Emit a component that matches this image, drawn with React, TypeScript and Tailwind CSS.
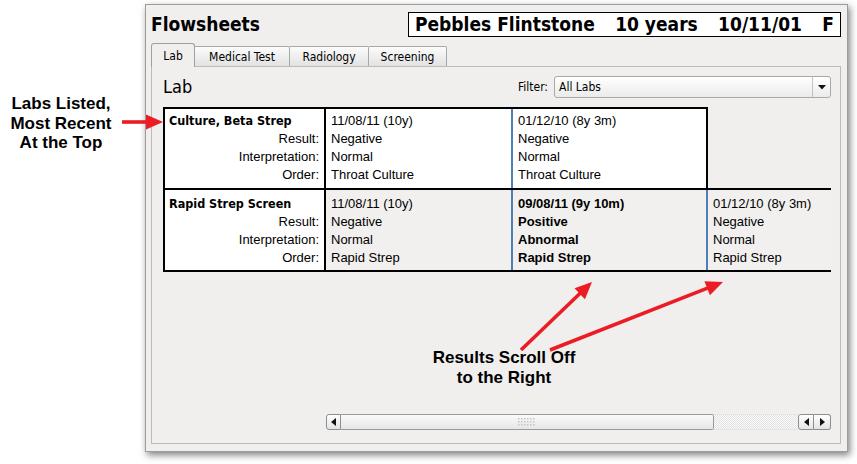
import React from "react";

const UI = { fontFamily: '"DejaVu Sans Condensed", "DejaVu Sans", sans-serif' };
const ARIAL = { fontFamily: '"Liberation Sans", Arial, sans-serif' };

function Arrow({ x1, y1, x2, y2 }: { x1: number; y1: number; x2: number; y2: number }) {
  const dx = x2 - x1;
  const dy = y2 - y1;
  const len = Math.sqrt(dx * dx + dy * dy);
  const ux = dx / len;
  const uy = dy / len;
  const hl = 17;
  const hw = 7.5;
  const bx = x2 - ux * hl;
  const by = y2 - uy * hl;
  const px = -uy * hw;
  const py = ux * hw;
  return (
    <g>
      <line x1={x1} y1={y1} x2={bx + ux} y2={by + uy} stroke="#ec1c24" strokeWidth={3.6} />
      <polygon points={`${x2},${y2} ${bx + px},${by + py} ${bx - px},${by - py}`} fill="#ec1c24" />
    </g>
  );
}

type Cell = { date: string; result: string; interp: string; order: string; bold: boolean };

const rows: { name: string; cells: Cell[] }[] = [
  {
    name: "Culture, Beta Strep",
    cells: [
      { date: "11/08/11 (10y)", result: "Negative", interp: "Normal", order: "Throat Culture", bold: false },
      { date: "01/12/10 (8y 3m)", result: "Negative", interp: "Normal", order: "Throat Culture", bold: false },
    ],
  },
  {
    name: "Rapid Strep Screen",
    cells: [
      { date: "11/08/11 (10y)", result: "Negative", interp: "Normal", order: "Rapid Strep", bold: false },
      { date: "09/08/11 (9y 10m)", result: "Positive", interp: "Abnormal", order: "Rapid Strep", bold: true },
      { date: "01/12/10 (8y 3m)", result: "Negative", interp: "Normal", order: "Rapid Strep", bold: false },
    ],
  },
];

function DataCell({ c, cls }: { c: Cell; cls: string }) {
  return (
    <div
      className={`${cls} shrink-0 pl-[5px] leading-[18px] text-[13px] text-black whitespace-nowrap ${c.bold ? "font-bold" : ""}`}
      style={ARIAL}
    >
      <div>{c.date}</div>
      <div>{c.result}</div>
      <div>{c.interp}</div>
      <div>{c.order}</div>
    </div>
  );
}

function LabelCell({ name, cls }: { name: string; cls: string }) {
  return (
    <div className={`${cls} w-[161px] shrink-0 bg-white border-r-2 border-black leading-[18px] text-black`}>
      <div className="pl-[4px] font-bold text-[12.5px]" style={UI}>
        {name}
      </div>
      <div className="pr-[5px] text-right text-[13px]" style={ARIAL}>
        <div>Result:</div>
        <div>Interpretation:</div>
        <div>Order:</div>
      </div>
    </div>
  );
}

export default function App() {
  return (
    <div className="relative w-[857px] h-[464px] bg-white overflow-hidden">
      <div className="flex">
        <div className="w-[145px] shrink-0 pt-[94px]">
          <div className="w-[122px] text-center font-bold text-[17px] leading-[19.5px] text-black" style={ARIAL}>
            <div>Labs Listed,</div>
            <div>Most Recent</div>
            <div>At the Top</div>
          </div>
        </div>

        <div className="mt-[4px] w-[703px] h-[448px] shrink-0 flex flex-col border border-[#9c9c9c] bg-[#f0efed] pl-[5px] pr-[6px] shadow-[2px_3px_7px_rgba(0,0,0,0.5)]">
          {/* Title row */}
          <div className="flex items-center justify-between pt-[7px]">
            <div className="text-[19px] font-bold text-black leading-none" style={UI}>
              Flowsheets
            </div>
            <div
              className="w-[433px] h-[25px] bg-white border border-black flex items-center justify-between px-[6px] text-[19px] font-bold text-black leading-none"
              style={UI}
            >
              <span>Pebbles Flintstone</span>
              <span>10 years</span>
              <span>10/11/01</span>
              <span>F</span>
            </div>
          </div>

          {/* Tabs */}
          <div className="mt-[6px] h-[23px] flex items-end text-[12px] text-black" style={UI}>
            <div className="relative z-10 -mb-px h-[24px] w-[44px] flex items-center justify-center bg-[#f0efed] border border-b-0 border-[#a0a0a0] rounded-t-[3px]">
              Lab
            </div>
            <div className="h-[20px] w-[95px] flex items-center justify-center border border-b-0 border-l-0 border-[#a8a8a8] bg-gradient-to-b from-[#fcfcfc] to-[#e2e2e2] rounded-tr-[2px]">
              Medical Test
            </div>
            <div className="h-[20px] w-[79px] flex items-center justify-center border border-b-0 border-l-0 border-[#a8a8a8] bg-gradient-to-b from-[#fcfcfc] to-[#e2e2e2] rounded-tr-[2px]">
              Radiology
            </div>
            <div className="h-[20px] w-[78px] flex items-center justify-center border border-b-0 border-l-0 border-[#a8a8a8] bg-gradient-to-b from-[#fcfcfc] to-[#e2e2e2] rounded-tr-[2px]">
              Screening
            </div>
          </div>

          {/* Panel */}
          <div className="flex-1 mb-[7px] flex flex-col border border-[#bcbcbc] pl-[11px] pr-[9px] pt-[9px] pb-[13px]">
            <div className="h-[22px] flex items-center justify-between">
              <div className="text-[18px] text-black leading-none" style={UI}>
                Lab
              </div>
              <div className="flex items-center gap-[6px] text-[12px] text-black" style={UI}>
                <span>Filter:</span>
                <div className="w-[277px] h-[22px] flex items-stretch rounded-[3px] border border-[#a9a9a9] bg-gradient-to-b from-white to-[#ebebeb]">
                  <div className="flex-1 flex items-center pl-[4px]">All Labs</div>
                  <div className="w-[18px] flex items-center justify-center border-l border-[#c2c2c2]">
                    <svg width="8" height="5" viewBox="0 0 8 5">
                      <polygon points="0,0 8,0 4,4.5" fill="#111" />
                    </svg>
                  </div>
                </div>
              </div>
            </div>

            {/* Table */}
            <div className="mt-[9px] w-[668px] overflow-hidden">
              <div className="w-[545px] flex border-2 border-b-0 border-black bg-white">
                <LabelCell name={rows[0].name} cls="h-[79px] pt-[3px]" />
                <DataCell c={rows[0].cells[0]} cls="w-[187px] h-[79px] pt-[3px] border-r-2 border-[#4f7fb4]" />
                <DataCell c={rows[0].cells[1]} cls="w-[193px] h-[79px] pt-[3px]" />
              </div>
              <div className="w-[720px] flex border-2 border-r-0 border-black bg-[#f1f0ee]">
                <LabelCell name={rows[1].name} cls="h-[80px] pt-[5px]" />
                <DataCell c={rows[1].cells[0]} cls="w-[187px] h-[80px] pt-[5px] border-r-2 border-[#4f7fb4]" />
                <DataCell c={rows[1].cells[1]} cls="w-[195px] h-[80px] pt-[5px] border-r-2 border-[#4f7fb4]" />
                <DataCell c={rows[1].cells[2]} cls="w-[160px] h-[80px] pt-[5px]" />
              </div>
            </div>

            {/* Scrollbar */}
            <div className="mt-auto ml-[163px] w-[505px] h-[16px] flex">
              <div className="w-[15px] flex items-center justify-center rounded-l-[3px] border border-[#8e8e8e] bg-gradient-to-b from-white to-[#e4e4e4]">
                <svg width="5" height="8" viewBox="0 0 5 8">
                  <polygon points="5,0 5,8 0,4" fill="#111" />
                </svg>
              </div>
              <div className="w-[373px] flex items-center justify-center border border-l-0 border-[#9a9a9a] rounded-r-[2px] bg-gradient-to-b from-[#fafafa] to-[#e6e6e6]">
                <svg width="18" height="9" viewBox="0 0 18 9">
                  {[0, 1, 2].map((r) =>
                    [0, 1, 2, 3, 4, 5].map((c) => (
                      <rect key={`${r}-${c}`} x={c * 3} y={r * 3} width="1.5" height="1.5" fill="#c4c4c4" />
                    ))
                  )}
                </svg>
              </div>
              <div className="flex-1 border-y border-[#e4e4e4] bg-[repeating-conic-gradient(#e2e2e2_0%_25%,#fbfbfb_0%_50%)] bg-[length:2px_2px]" />
              <div className="w-[16px] flex items-center justify-center rounded-l-[3px] border border-[#8e8e8e] bg-gradient-to-b from-white to-[#e4e4e4]">
                <svg width="5" height="8" viewBox="0 0 5 8">
                  <polygon points="5,0 5,8 0,4" fill="#111" />
                </svg>
              </div>
              <div className="w-[17px] flex items-center justify-center rounded-r-[3px] border border-l-0 border-[#8e8e8e] bg-gradient-to-b from-white to-[#e4e4e4]">
                <svg width="5" height="8" viewBox="0 0 5 8">
                  <polygon points="0,0 0,8 5,4" fill="#111" />
                </svg>
              </div>
            </div>
          </div>
        </div>
      </div>

      {/* Annotation overlay */}
      <div
        className="absolute left-[404px] top-[348px] w-[200px] text-center font-bold text-[17px] leading-[20px] text-black"
        style={ARIAL}
      >
        <div>Results Scroll Off</div>
        <div>to the Right</div>
      </div>
      <svg className="absolute left-0 top-0 pointer-events-none" width="857" height="464">
        <Arrow x1={122} y1={122} x2={163} y2={122} />
        <Arrow x1={521} y1={350} x2={592} y2={282} />
        <Arrow x1={550} y1={350} x2={723} y2={282} />
      </svg>
    </div>
  );
}
